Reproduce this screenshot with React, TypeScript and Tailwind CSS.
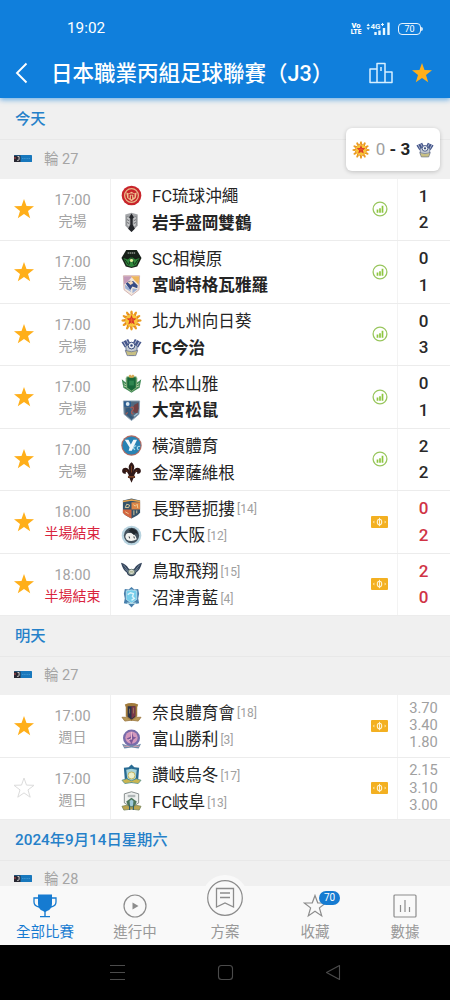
import React from "react";

interface Team {
  name: string;
  crest: string;
  rank?: number;
  winner?: boolean;
}

interface Match {
  time: string;
  status: string;
  live?: boolean;
  favorite: boolean;
  home: Team;
  away: Team;
  scores?: [number, number];
  odds?: string[];
  icon: "stats" | "ticket";
}

const todayMatches: Match[] = [
  { time: "17:00", status: "完場", favorite: true, home: { name: "FC琉球沖繩", crest: "ryukyu" }, away: { name: "岩手盛岡雙鶴", crest: "iwate", winner: true }, scores: [1, 2], icon: "stats" },
  { time: "17:00", status: "完場", favorite: true, home: { name: "SC相模原", crest: "sagamihara" }, away: { name: "宮崎特格瓦雅羅", crest: "miyazaki", winner: true }, scores: [0, 1], icon: "stats" },
  { time: "17:00", status: "完場", favorite: true, home: { name: "北九州向日葵", crest: "kitakyushu" }, away: { name: "FC今治", crest: "imabari", winner: true }, scores: [0, 3], icon: "stats" },
  { time: "17:00", status: "完場", favorite: true, home: { name: "松本山雅", crest: "matsumoto" }, away: { name: "大宮松鼠", crest: "omiya", winner: true }, scores: [0, 1], icon: "stats" },
  { time: "17:00", status: "完場", favorite: true, home: { name: "橫濱體育", crest: "yokohama" }, away: { name: "金澤薩維根", crest: "kanazawa" }, scores: [2, 2], icon: "stats" },
  { time: "18:00", status: "半場結束", live: true, favorite: true, home: { name: "長野琶扼摟", crest: "nagano", rank: 14 }, away: { name: "FC大阪", crest: "osaka", rank: 12 }, scores: [0, 2], icon: "ticket" },
  { time: "18:00", status: "半場結束", live: true, favorite: true, home: { name: "鳥取飛翔", crest: "tottori", rank: 15 }, away: { name: "沼津青藍", crest: "numazu", rank: 4 }, scores: [2, 0], icon: "ticket" },
];

const tomorrowMatches: Match[] = [
  { time: "17:00", status: "週日", favorite: true, home: { name: "奈良體育會", crest: "nara", rank: 18 }, away: { name: "富山勝利", crest: "toyama", rank: 3 }, odds: ["3.70", "3.40", "1.80"], icon: "ticket" },
  { time: "17:00", status: "週日", favorite: false, home: { name: "讚岐烏冬", crest: "sanuki", rank: 17 }, away: { name: "FC岐阜", crest: "gifu", rank: 13 }, odds: ["2.15", "3.10", "3.00"], icon: "ticket" },
];

// Crest drawings share a 22x22 box
const crests: Record<string, React.ReactNode> = {
  ryukyu: (
    <>
      <circle cx="11" cy="11" r="10.3" fill="#c8242b" />
      <circle cx="11" cy="11" r="7.2" fill="none" stroke="#e9b98a" strokeWidth="1.3" />
      <path d="M5.5 7.5 8 9l3-2 3 2 2.5-1.5-1 6L11 17l-4.5-3.5z" fill="#efc08f" />
      <path d="M8.5 14V9.5M11 15v-4M13.5 13V9.5M9 9.5h4" stroke="#bd2029" strokeWidth="1.3" fill="none" />
    </>
  ),
  iwate: (
    <>
      <path d="M4.5 2.5 11 .8l6.500 1.700v12L11 21l-6.500-6.500z" fill="#a5a7aa" />
      <path d="M6 4.500v9.500l3.500 3V6zM16 4.500v9.500l-3.500 3V6z" fill="#c9cacc" stroke="#77797c" strokeWidth=".7" />
      <path d="m11 1.500 2.500 4-1.300 1.500v6l2.300 4.500L11 21l-3.500-3.500L9.800 13V7L8.500 5.500z" fill="#24262a" />
      <path d="m6.500 8 2 1M6.500 11l2 1M15.500 8l-2 1M15.500 11l-2 1" stroke="#55575b" strokeWidth=".9" />
    </>
  ),
  sagamihara: (
    <>
      <path d="M5.500 2h11L21.500 10.500 17 19.500 11 21l-6-1.500L.5 10.500z" fill="#182119" />
      <path d="M2.500 10.500 7 12l4-2.500 4 2.500 4.500-1.500L16 18l-5 1.800L6 18z" fill="#2f873b" />
      <path d="m11 10-3 8M11 10l3 8M4 12l3.500 5M18 12l-3.500 5" stroke="#142d18" strokeWidth="1" />
      <circle cx="11" cy="13" r="1.700" fill="#e4ed9b" />
      <path d="M7 5.300h8" stroke="#899089" strokeWidth="1.600" strokeDasharray="1.500 .6" />
    </>
  ),
  miyazaki: (
    <>
      <path d="M2.500.8h17l-.7 14.700L11 21.500l-7.800-6z" fill="#f2e8de" stroke="#c9a1a0" strokeWidth=".8" />
      <path d="M3 1.300h9l-5 5.700-3.700 3z" fill="#c39ab8" />
      <path d="M10.500 1.300H19l-.4 9-4.600-4.800z" fill="#eeb65d" />
      <path d="m5 9 4-3 4 .5 4.500 4.500-.5 3-5-2-2.500 4z" fill="#354b85" />
      <path d="m4 10 4 3 3 5-6.500-3.800zM12 14l5.500.8L12 19z" fill="#9db0d5" />
      <path d="m7 7.500 3 3 3-2-2-2.500z" fill="#f4d8bd" />
    </>
  ),
  kitakyushu: (
    <>
      {[0, 30, 60, 90, 120, 150, 180, 210, 240, 270, 300, 330].map((deg) => (
        <ellipse key={deg} cx="11" cy="2.800" rx="1.300" ry="2.400" fill="#ea9c20" transform={`rotate(${deg} 11 11)`} />
      ))}
      <circle cx="11" cy="11" r="7" fill="#f8c538" stroke="#e1782b" strokeWidth="1.200" strokeDasharray="1.800 1.800" />
      <path d="m11 5 1.400 3.700 4 .1-3.100 2.500 1.100 4-3.400-2.300-3.400 2.300 1.100-4-3.100-2.500 4-.1z" fill="#db3827" />
      <path d="M11 8.500v6M8.500 10.500h5" stroke="#e9692c" strokeWidth=".9" />
    </>
  ),
  imabari: (
    <>
      <path d="m.5 5.500 7-3.500 3 6-6.500 3zM21.500 5.500l-7-3.500-3 6 6.500 3z" fill="#45568b" />
      <path d="m2.500 4.500 3 5.500M5.500 3l3 5.500M19.500 4.500l-3 5.500M16.500 3l-3 5.500" stroke="#dfe4ee" strokeWidth=".8" />
      <path d="M5 9.500 7.500 8h7L17 9.500l-.5 6.500-3 3h-5l-3-3z" fill="#c4cad0" stroke="#475986" strokeWidth=".8" />
      <circle cx="11" cy="9" r="3.500" fill="#edf0f3" stroke="#34477b" strokeWidth="1" />
      <circle cx="11" cy="9" r="1.300" fill="#34477b" />
      <path d="M4.500 14q6.500 3 13 0L15.500 19.500h-9z" fill="#c8c083" stroke="#59658a" strokeWidth=".7" />
    </>
  ),
  matsumoto: (
    <>
      <path d="M.8 6.500 5 10V5h12v5l4.200-3.500-1.700 9L15 18l-4 2.800L7 18l-4.500-2.500z" fill="#438b58" />
      <path d="M6 4h10v11.500l-5 3.500-5-3.500z" fill="#18683a" stroke="#9dbc85" strokeWidth=".8" />
      <path d="M8.500 8h5v5h-5z" fill="#2f8650" />
      <path d="m8 3 1.500-1.500L11 3l1.500-1.500L14 3l-1 2H9z" fill="#d6a650" />
      <path d="m3 11 2.500 1.500M2.800 13.500l3 1M19 11l-2.500 1.500M19.200 13.500l-3 1" stroke="#d5e1bd" strokeWidth=".8" />
    </>
  ),
  omiya: (
    <>
      <path d="M2.500 1h17l-.7 14L11 21.500 3.200 15z" fill="#52697f" stroke="#91a7ba" strokeWidth="1" />
      <path d="M3 1.500h7.500v5.500h-7z" fill="#295c91" />
      <circle cx="7" cy="4.200" r="2" fill="#d9e6ee" />
      <path d="m18 3-4 2-2 4 1.500 4 3.500 1 1.500-5z" fill="#713f43" />
      <path d="m5 9 4-1 2 3-1 5 3 2-2 2-6-5.500z" fill="#34597b" />
      <path d="M10 8c3-2 4 1 2 3s-1 3 1 4M5 15l2-2" stroke="#a95a52" strokeWidth="1.300" fill="none" />
      <path d="m13.500 17 4-3" stroke="#9fc2d5" strokeWidth="1.500" />
    </>
  ),
  yokohama: (
    <>
      <circle cx="11" cy="11" r="10.700" fill="#b26b62" />
      <circle cx="11" cy="11" r="9.500" fill="#2983b4" />
      <path d="M4 5h3.800l2.500 5L13 5h3.800l-5.500 11.500H8L9 13z" fill="#f2f8fa" />
      <path d="M16 11.500c-3-.5-4 3-1.200 3.800M20 12c-3-1-4 2.700-1.500 3.400" fill="none" stroke="#a8dded" strokeWidth="1.200" />
    </>
  ),
  kanazawa: (
    <>
      <path d="M11 .3c4.500 4 2.800 6.500 1.500 10 1.500-5 7-5.500 8.200-1.800.8 3-2 4.500-4 3.500 1-1-.5-2.200-1.500-.8l-1.700 3.300h1.200v2.300h-1.500L11 21.700l-2.200-4.900H7.300v-2.300h1.200l-1.700-3.300c-1-1.400-2.500-.2-1.500.8-2 1-4.800-.5-4-3.500C2.500 4.800 8 5.300 9.500 10.300 8.200 6.800 6.500 4.300 11 .3z" fill="#301816" />
      <path d="M11 4v7M5 9l2 1M17 9l-2 1" stroke="#8b4b25" strokeWidth=".8" />
      <path d="M7.500 15.600h7" stroke="#c5713b" strokeWidth=".9" />
    </>
  ),
  nagano: (
    <>
      <path d="m2 2.500 4.500-1L11 .5l4.500 1 4.500 1V15q-1 3-9 6.500Q3 18 2 15z" fill="#35536a" />
      <path d="M11 4.500h9V12h-9z" fill="#de8748" />
      <path d="M2 12h9v9.500Q3 18 2 15z" fill="#d2653f" />
      <path d="M2 3.700 11 2l9 1.700" fill="none" stroke="#e5a34f" strokeWidth="1.600" />
      <path d="m4.500 10 1.500-3.500 3 1-1 2.500zM13 7l2 1.500L17 6.500l.5 4M4.500 14.500l3.500 2M13.500 13v5M16.500 13v3" fill="none" stroke="#f0d7a0" strokeWidth=".9" />
    </>
  ),
  osaka: (
    <>
      <circle cx="11" cy="11" r="10.300" fill="#b8d3df" />
      <circle cx="11" cy="11" r="8" fill="#43515c" />
      <path d="M4.500 12.500q.5-4.500 4-4 4-1 7 3.500l1 3Q11 18.500 6 15.500z" fill="#f1f2ef" />
      <path d="m8 6 3-2.500 5 2 2 4.500-2.500-1.500-2 2L11 8z" fill="#20272d" />
      <path d="m8.500 12 .5 2M13.500 12l.5 2" stroke="#232b32" strokeWidth="1" />
    </>
  ),
  tottori: (
    <>
      <path d="M0 3q5 1 8 6l3 1.500L14 9q3-5 8-6-2 8-6 10-1 4-5 4t-5-4Q2 11 0 3z" fill="#34445b" />
      <path d="M2.500 5 8 12M19.500 5 14 12M4 9l4 4M18 9l-4 4" stroke="#8ca1b1" strokeWidth=".7" />
      <ellipse cx="11" cy="12.500" rx="3.300" ry="2.800" fill="#d9ddd0" stroke="#6c7e78" />
      <path d="M9 12.500h4" stroke="#949f75" strokeWidth="1" />
    </>
  ),
  numazu: (
    <>
      <path d="m4 2 4 .5L11 0l3 2.500 4-.5 1 5-1 5 1 5-5 1-3 3.500L8 18l-5-1 1-5-1-5z" fill="#477fac" />
      <path d="m5.500 4 5.500-1 5.500 1v9L11 17l-5.500-4z" fill="#75cdea" stroke="#d2edf5" strokeWidth=".7" />
      <path d="m7 8 3-2 3 1-1 3 2 2-3 2" fill="none" stroke="#def4fa" strokeWidth="1.500" />
      <path d="M6 17h10" stroke="#bfe3ed" strokeWidth="1.300" />
    </>
  ),
  nara: (
    <>
      <path d="M4 2.500q7-3 14 0l-1 3V15l-6 5-6-5V5.500z" fill="#a27b3c" />
      <path d="M7 4.500h8v11l-4 3-4-3z" fill="#293249" />
      <path d="M11 4.500h4v10l-4 3z" fill="#793749" />
      <path d="m1 16 5 0 5 3 5-3 5 0-3 4-7-1-7 1z" fill="#b99955" stroke="#98743c" strokeWidth=".8" />
      <path d="M9 7v5M13 6v6" stroke="#a78b5f" strokeWidth=".8" />
    </>
  ),
  toyama: (
    <>
      <circle cx="11" cy="9.500" r="8.900" fill="#776caa" />
      <circle cx="11" cy="9" r="6.500" fill="#d398bd" />
      <path d="m11 2 2 6 3 1-3 2-2 5-2-4-3-2 4-2z" fill="#7c5898" />
      <path d="M11 3v8M7 12l4-2" stroke="#f0bfd1" strokeWidth="1" fill="none" />
      <path d="M1 15.500 6 17h10l5-1.500-2.500 5-7.500-1-7.500 1z" fill="#718ba9" />
      <path d="m3 18 6 .5M13 18.500l6-.5" stroke="#cf9fae" strokeWidth="1" />
    </>
  ),
  sanuki: (
    <>
      <path d="M3 4 8 3.500 11 .5l3 3 5 .5-1 12.500L11 20l-7-3.500z" fill="#286b93" />
      <path d="m5.500 6 5.500-1 5.500 1-1 9-4.500 3-4.500-3z" fill="#a8d4d8" />
      <circle cx="11" cy="12" r="3.700" fill="#edf0ca" stroke="#c0b15a" strokeWidth="1" />
      <path d="m1 17 5-1.500 5 2 5-2 5 1.500-3 3.500-7-1-7 1z" fill="#cbb650" stroke="#4d8d8b" strokeWidth=".8" />
    </>
  ),
  gifu: (
    <>
      <path d="M3.500 3 11 .8 18.500 3v9.500L11 17l-7.500-4.500z" fill="#eef0ef" stroke="#78807f" strokeWidth=".9" />
      <path d="M7 4h8v2.500H7z" fill="#b1b7b8" />
      <path d="m5.500 11 5.500-4 5.500 4-2 5-3.500 2-3.500-2z" fill="#4d765c" />
      <path d="m9 10.500 2-1.500 2 1.500-.5 5.500h-3z" fill="#9fcadb" />
      <path d="m1 16 5-1 5 2 5-2 5 1-2 4-8-1-8 1z" fill="#bea64f" stroke="#768559" strokeWidth=".8" />
      <path d="M9 15v5M13 15v5" stroke="#325f6a" strokeWidth="1.200" />
    </>
  ),
};

const Crest: React.FC<{ id: string; className?: string }> = ({ id, className = "w-[21px] h-[21px]" }) => (
  <svg viewBox="0 0 22 22" className={`shrink-0 ${className}`}>{crests[id]}</svg>
);

const Star: React.FC<{ filled?: boolean; className?: string }> = ({ filled = true, className = "w-[21px] h-[21px]" }) => (
  <svg viewBox="0 0 22 22" className={className}>
    <path
      d="M11 1 13.500 8.100 21 8.300 15 12.900 17.200 20.200 11 15.900 4.800 20.200 7 12.900 1 8.300 8.500 8.100z"
      fill={filled ? "#ffaf1a" : "none"}
      stroke={filled ? "none" : "#dcdcdc"}
      strokeWidth="1"
    />
  </svg>
);

const StatsIcon = () => (
  <svg viewBox="0 0 16 16" className="w-4 h-4">
    <circle cx="8" cy="8" r="6.900" fill="none" stroke="#99c65e" strokeWidth="1.300" />
    <path d="M5.500 8.500v3.200M8 7.200v4.500M10.500 4.700v7" stroke="#8dc63f" strokeWidth="1.700" />
  </svg>
);

const TicketIcon = () => (
  <svg viewBox="0 0 17 12" className="w-[17px] h-3">
    <rect width="17" height="12" rx="1" fill="#f3b021" />
    <ellipse cx="8.500" cy="6" rx="2.200" ry="2.800" fill="none" stroke="#fff3d2" strokeWidth="1.100" />
    <path d="M8.500 1.800v8.400" stroke="#fff3d2" strokeWidth="1" />
    <path d="M2 6l1.300-1.500v3zM15 6l-1.300-1.500v3z" fill="#fff3d2" />
  </svg>
);

const StatusBar = () => (
  <div className="h-[46px] pl-[67px] pr-[27px] pt-[12px] flex items-center justify-between text-white">
    <span className="text-[15.3px] leading-none">19:02</span>
    <div className="flex items-center">
      <div className="flex flex-col items-center text-[7.5px] leading-[6.5px] font-black w-[10px]">
        <span>Vo</span>
        <span className="text-[6.5px]">LTE</span>
      </div>
      <svg viewBox="0 0 25 16" className="w-[25px] h-4 ml-[5px]">
        <path d="m.5 5 1.700-2.500L4 5M.5 6.500 2.200 9 4 6.500" fill="#e9f8ff" />
        <text x="4.500" y="7.500" fontSize="8" fontWeight="700" fill="#e9f8ff" fontFamily="Roboto, sans-serif">4G</text>
        <path d="M15 3.500h3M16.500 2v3" stroke="#e9f8ff" strokeWidth="1" />
        <path d="M9.500 14v-3M13.500 14V9.500M18 14V7M22.500 14V1.500" stroke="#e9f8ff" strokeWidth="2.400" />
      </svg>
      <div className="ml-[7px] w-[23px] h-[12px] rounded-[4px] border border-white/90 flex items-center justify-center text-[9px] leading-none">70</div>
      <div className="w-[2px] h-1 bg-white/80 rounded-r-sm" />
    </div>
  </div>
);

const Header = () => (
  <header className="h-[98px] shrink-0 bg-[#107fdc] shadow-[0_2px_5px_rgba(16,127,220,0.55)] relative">
    <StatusBar />
    <div className="h-[53px] flex items-center pl-[15px] pr-[17px]">
      <svg viewBox="0 0 13 22" className="w-[13px] h-[22px]">
        <path d="M11.500 1.500 2 11l9.500 9.500" fill="none" stroke="white" strokeWidth="1.900" />
      </svg>
      <h1 className="ml-[23px] pt-[3px] text-[21.5px] leading-none font-medium text-white whitespace-nowrap">日本職業丙組足球聯賽（J3）</h1>
      <svg viewBox="0 0 24 22" className="w-6 h-[22px] ml-auto">
        <path d="M8 20.500V1.500h8v19M8 7H1v13.500h22V10h-7M12 5v4" fill="none" stroke="#d7f0ff" strokeWidth="1.500" strokeLinejoin="round" />
      </svg>
      <Star className="w-[22px] h-[22px] ml-[18px]" />
    </div>
  </header>
);

const DateTitle: React.FC<{ title: string; className?: string }> = ({ title, className = "h-[40.5px] pt-[2px]" }) => (
  <div className={`shrink-0 bg-[#f0f0f0] border-b border-[#e8e8e8] flex items-center pl-[15px] text-[15.3px] leading-none font-medium text-[#2580c9] ${className}`}>
    {title}
  </div>
);

const RoundTitle: React.FC<{ round: number }> = ({ round }) => (
  <div className="h-[38.5px] shrink-0 bg-[#f0f0f0] flex items-center pl-[14px]">
    <svg viewBox="0 0 18 7" className="w-[18px] h-[7px] -mt-[2px]">
      <rect width="18" height="7" rx=".6" fill="#1878bd" />
      <path d="M0 .5h6.500V7H0z" fill="#282832" />
      <path d="M3.500 1.500h1.600v2.700q0 1.500-2 1.200" fill="none" stroke="#eee" strokeWidth=".8" />
      <path d="M1 2v2" stroke="#c34a50" strokeWidth="1" />
      <path d="M8 3.500h8" stroke="#3b93cf" strokeWidth="1.200" strokeDasharray="1.200 .5" />
    </svg>
    <span className="ml-3 pt-px text-[14.5px] leading-none text-[#a5a5a5]">輪 {round}</span>
  </div>
);

const TeamLine: React.FC<{ team: Team }> = ({ team }) => (
  <div className="h-[26.6px] flex items-center">
    <Crest id={team.crest} />
    <span className={`ml-[10px] pt-[3px] text-[16.6px] leading-none whitespace-nowrap text-[#242424] ${team.winner ? "font-bold" : ""}`}>{team.name}</span>
    {team.rank && <span className="ml-[2px] pt-[2px] text-[12px] leading-none text-[#a0a0a0]">[{team.rank}]</span>}
  </div>
);

const MatchRow: React.FC<{ match: Match }> = ({ match }) => (
  <div className="h-[62.5px] shrink-0 bg-white border-b border-[#ececec] flex">
    <div className="w-[35px] pl-[13px] flex items-center">
      <Star filled={match.favorite} className="w-[22px] h-[22px] shrink-0" />
    </div>
    <div className="w-[76px] pt-[3px] border-r border-[#f0f0f0] flex flex-col items-center justify-center">
      <span className="text-[14.5px] leading-[21px] text-[#a3a3a3]">{match.time}</span>
      <span className={`text-[14px] leading-[21px] whitespace-nowrap ${match.live ? "text-[#d9243d]" : "text-[#a3a3a3]"}`}>{match.status}</span>
    </div>
    <div className="flex-1 pl-[10px] flex flex-col justify-center">
      <TeamLine team={match.home} />
      <TeamLine team={match.away} />
    </div>
    <div className="w-[34px] pr-px flex items-center justify-center">
      {match.icon === "stats" ? <StatsIcon /> : <TicketIcon />}
    </div>
    <div className="w-[53px] pr-px border-l border-[#f3f3f3] flex flex-col items-center justify-center">
      {match.scores?.map((score, i) => (
        <span key={i} className={`text-[17px] leading-[26.6px] font-medium ${match.live ? "text-[#d03345]" : "text-[#292929]"}`}>{score}</span>
      ))}
      {match.odds?.map((odd) => (
        <span key={odd} className="text-[14.7px] leading-[17.2px] text-[#a0a0a0]">{odd}</span>
      ))}
    </div>
  </div>
);

const ScoreToast = () => (
  <div className="absolute left-[346px] top-[128px] w-[94px] h-[43px] rounded-md bg-white shadow-[0_1px_4px_rgba(0,0,0,0.2)] flex items-center justify-between px-[6px]">
    <Crest id="kitakyushu" className="w-[18px] h-[18px]" />
    <span className="text-[17px] leading-none font-bold whitespace-pre text-[#242424]">
      <span className="font-normal text-[#a0a0a0]">0</span> - 3
    </span>
    <Crest id="imabari" className="w-[18px] h-[18px]" />
  </div>
);

const NavItem: React.FC<{ label: string; active?: boolean; children: React.ReactNode }> = ({ label, active, children }) => (
  <div className={`flex-1 flex flex-col items-center ${active ? "text-[#167bd1]" : "text-[#8c8c8c]"}`}>
    <div className="h-[39px] flex items-center justify-center">{children}</div>
    <span className={`pt-px text-[14.5px] leading-[14px] whitespace-nowrap ${active ? "" : "text-[#989898]"}`}>{label}</span>
  </div>
);

const BottomNav = () => (
  <nav className="absolute left-0 top-[886px] w-full h-[59px] bg-[#f9f9f9] flex">
    <NavItem label="全部比賽" active>
      <svg viewBox="0 0 24 24" className="w-6 h-6">
        <path d="M5 .5h14v9q0 6-5 7.500-1 .5-1.300 1v4H17v1.200H7V22h4.300v-4q-.3-.5-1.300-1-5-1.500-5-7.500z" fill="currentColor" />
        <path d="M5.500 4H1v4q0 4 5 5M18.500 4H23v4q0 4-5 5" fill="none" stroke="currentColor" strokeWidth="1.300" />
      </svg>
    </NavItem>
    <NavItem label="進行中">
      <svg viewBox="0 0 24 24" className="w-6 h-6">
        <circle cx="12" cy="12" r="11" fill="none" stroke="currentColor" strokeWidth="1.200" />
        <path d="m9.500 8.500 6 3.500-6 3.500z" fill="currentColor" />
      </svg>
    </NavItem>
    <NavItem label="方案">
      <div className="relative -top-[8px] shrink-0 w-[46px] h-[46px] rounded-full bg-[#f9f9f9] flex items-center justify-center">
        <svg viewBox="0 0 38 38" className="w-[38px] h-[38px]">
          <circle cx="19" cy="19" r="17.300" fill="none" stroke="currentColor" strokeWidth="1.200" />
          <path d="M10.500 9.500h17v18.500L19 24l-8.500 4zM14 14h10M14 18.500h10" fill="none" stroke="currentColor" strokeWidth="1.300" />
        </svg>
      </div>
    </NavItem>
    <NavItem label="收藏">
      <div className="relative">
        <svg viewBox="0 0 24 24" className="w-6 h-6">
          <path d="m12 1.500 2.700 7.300 8 .2-6.300 4.900 2.300 8L12 17.300l-6.700 4.600 2.300-8L1.300 9l8-.2z" fill="none" stroke="currentColor" strokeWidth="1.200" />
        </svg>
        <span className="absolute left-[16px] -top-[3px] w-[21px] h-[14px] rounded-full bg-[#167bd1] text-white text-[10px] leading-[14px] text-center">70</span>
      </div>
    </NavItem>
    <NavItem label="數據">
      <svg viewBox="0 0 24 24" className="w-6 h-6">
        <rect x="1" y="1" width="22" height="22" rx="1" fill="none" stroke="currentColor" strokeWidth="1.200" />
        <path d="M7.500 11v7M12 6v12M16.500 13v5" stroke="currentColor" strokeWidth="1.200" />
      </svg>
    </NavItem>
  </nav>
);

const SystemBar = () => (
  <div className="absolute left-0 top-[945px] w-full h-[55px] bg-black text-[#4b4b4b] flex items-center justify-center gap-[91px]">
    <svg viewBox="0 0 17 17" className="w-[17px] h-[17px]">
      <path d="M1 1.500h15M1 8.500h15M1 15.500h15" stroke="currentColor" strokeWidth="1" />
    </svg>
    <svg viewBox="0 0 17 17" className="w-[17px] h-[17px]">
      <rect x="1.500" y="1.500" width="14" height="14" rx="3" fill="none" stroke="currentColor" strokeWidth="1.100" />
    </svg>
    <svg viewBox="0 0 17 17" className="w-[17px] h-[17px]">
      <path d="M14.500 1.500v14L1.500 8.500z" fill="none" stroke="currentColor" strokeWidth="1.100" strokeLinejoin="round" />
    </svg>
  </div>
);

export default function App() {
  return (
    <div className="relative w-[450px] h-[1000px] overflow-hidden bg-[#f0f0f0] flex flex-col font-[Roboto,'Noto_Sans_CJK_TC',sans-serif]">
      <Header />
      <DateTitle title="今天" className="h-[42px] pt-[3px]" />
      <RoundTitle round={27} />
      {todayMatches.map((match) => (
        <MatchRow key={match.home.crest} match={match} />
      ))}
      <DateTitle title="明天" />
      <RoundTitle round={27} />
      {tomorrowMatches.map((match) => (
        <MatchRow key={match.home.crest} match={match} />
      ))}
      <DateTitle title="2024年9月14日星期六" />
      <RoundTitle round={28} />
      <ScoreToast />
      <BottomNav />
      <SystemBar />
    </div>
  );
}
